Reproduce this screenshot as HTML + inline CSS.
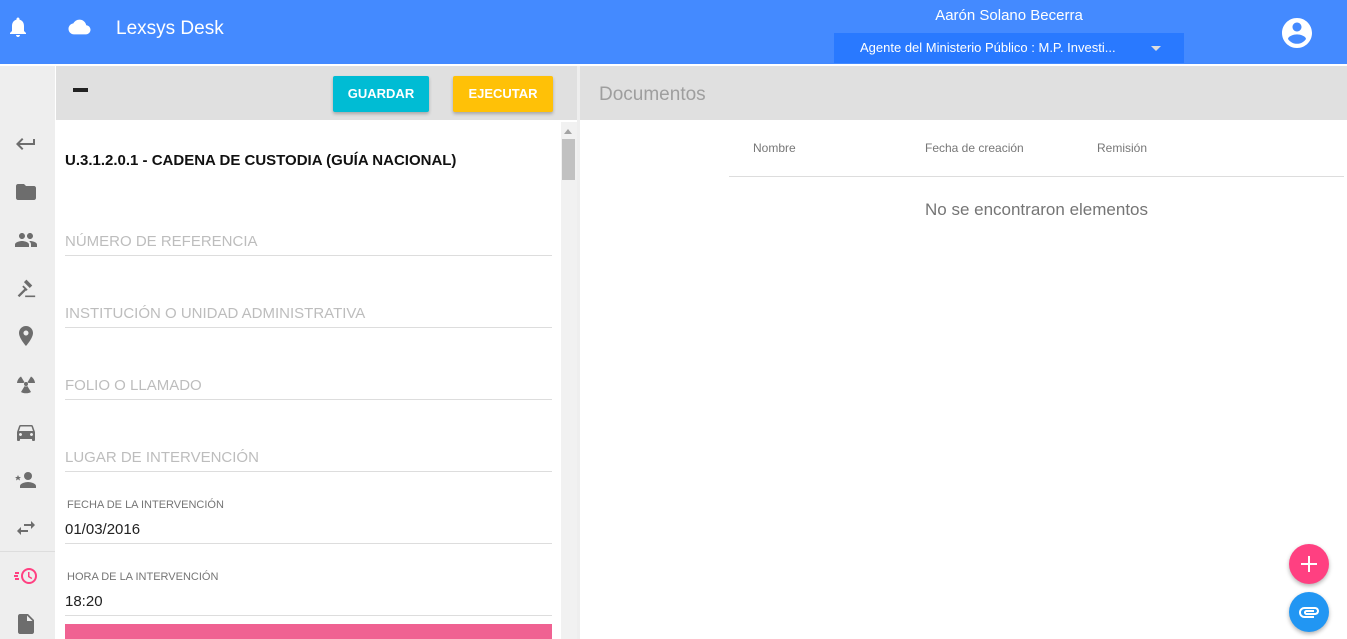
<!DOCTYPE html>
<html><head><meta charset="utf-8"><style>
*{margin:0;padding:0;box-sizing:border-box}
body{width:1347px;height:639px;overflow:hidden;background:#fff;font-family:"Liberation Sans",sans-serif;position:relative}
.abs{position:absolute}
.hdr{left:0;top:0;width:1347px;height:64px;background:#448aff}
.side{left:0;top:66px;width:55px;height:573px;background:#eeeeee}
.ico{position:absolute;left:14px;width:24px;height:24px;fill:#6d6d6d}
.field{position:absolute;left:65px;width:487px;border-bottom:1px solid #ddd;color:#bdbdbd;font-size:15px;padding-top:2px}
.lbl{position:absolute;left:67px;font-size:11px;color:#757575}
.val{position:absolute;left:65px;font-size:15px;color:#222}
</style></head><body>
<div class="abs hdr"></div>
<svg class="abs" style="left:6px;top:14px" width="24" height="26" viewBox="0 0 24 24" fill="#fff"><path d="M12 22c1.1 0 2-.9 2-2h-4c0 1.1.9 2 2 2zm6-6v-5c0-3.07-1.63-5.64-4.5-6.32V4c0-.83-.67-1.5-1.5-1.5s-1.5.67-1.5 1.5v.68C7.64 5.36 6 7.92 6 11v5l-2 2v1h16v-1l-2-2z"/></svg>
<svg class="abs" style="left:66px;top:16px" width="27" height="22" viewBox="0 0 24 24" fill="#fff"><path d="M19.35 10.04C18.67 6.59 15.64 4 12 4 9.11 4 6.6 5.64 5.35 8.04 2.34 8.36 0 10.91 0 14c0 3.31 2.69 6 6 6h13c2.76 0 5-2.24 5-5 0-2.64-2.05-4.78-4.65-4.96z"/></svg>
<div class="abs" style="left:116px;top:18px;color:#fff;font-size:19px">Lexsys Desk</div>
<div class="abs" style="left:834px;top:7px;width:350px;text-align:center;color:#fff;font-size:15px">Aarón Solano Becerra</div>
<div class="abs" style="left:834px;top:33px;width:350px;height:30px;background:#2979ff;color:#fff;font-size:13px;padding:7px 0 0 26px">Agente del Ministerio Público : M.P. Investi...</div>
<div class="abs" style="left:1151px;top:46px;width:0;height:0;border-left:5px solid transparent;border-right:5px solid transparent;border-top:5px solid #ddd"></div>
<svg class="abs" style="left:1279px;top:15px" width="36" height="36" viewBox="0 0 24 24" fill="#fff"><path d="M12 2C6.48 2 2 6.48 2 12s4.48 10 10 10 10-4.48 10-10S17.52 2 12 2zm0 3c1.66 0 3 1.34 3 3s-1.34 3-3 3-3-1.34-3-3 1.34-3 3-3zm0 14.2c-2.5 0-4.71-1.28-6-3.22.03-1.99 4-3.08 6-3.08 1.99 0 5.97 1.09 6 3.08-1.29 1.94-3.5 3.22-6 3.22z"/></svg>

<div class="abs" style="left:0;top:66px;width:55px;height:54px;background:#eeeeee"></div>
<div class="abs side"></div>
<div class="abs" style="left:0;top:551px;width:55px;height:1px;background:#ddd"></div>
<svg class="ico" style="top:132px" viewBox="0 0 24 24"><path d="M19 7v4H5.83l3.58-3.59L8 6l-6 6 6 6 1.41-1.41L5.83 13H21V7z"/></svg>
<svg class="ico" style="top:180px" viewBox="0 0 24 24"><path d="M10 4H4c-1.1 0-2 .9-2 2v12c0 1.1.9 2 2 2h16c1.1 0 2-.9 2-2V8c0-1.1-.9-2-2-2h-8l-2-2z"/></svg>
<svg class="ico" style="top:228px" viewBox="0 0 24 24"><path d="M16 11c1.66 0 2.99-1.34 2.99-3S17.66 5 16 5c-1.66 0-3 1.34-3 3s1.34 3 3 3zm-8 0c1.66 0 2.99-1.34 2.99-3S9.66 5 8 5C6.34 5 5 6.34 5 8s1.34 3 3 3zm0 2c-2.33 0-7 1.17-7 3.5V19h14v-2.5c0-2.33-4.67-3.5-7-3.5zm8 0c-.29 0-.62.02-.97.05 1.16.84 1.97 1.97 1.97 3.45V19h6v-2.5c0-2.33-4.67-3.5-7-3.5z"/></svg>
<svg class="ico" style="top:278px;left:16px;width:20px;height:20px" viewBox="0 0 24 24"><path d="M11 21h12v2H11zM2 21l9-9 2 2-9 9zM12.5 2l7 7-3 3-7-7zM9 9l5 5-1.5 1.5-5-5zM16 5l4 4"/></svg>
<svg class="ico" style="top:324px" viewBox="0 0 24 24"><path d="M12 2C8.13 2 5 5.13 5 9c0 5.25 7 13 7 13s7-7.75 7-13c0-3.87-3.13-7-7-7zm0 9.5c-1.38 0-2.5-1.12-2.5-2.5s1.12-2.5 2.5-2.5 2.5 1.12 2.5 2.5-1.12 2.5-2.5 2.5z"/></svg>
<svg class="ico" style="top:372px" viewBox="0 0 24 24"><circle cx="12" cy="12" r="2"/><path d="M10.5 10.3 7 4.5C4.7 5.9 3.2 8.3 3 11h6.5c.2-.3.6-.6 1-.7zM13.5 10.3c.4.1.8.4 1 .7H21c-.2-2.7-1.7-5.1-4-6.5zM12 14.5c-.6 0-1-.1-1.4-.4L7 20c1.5.9 3.2 1.3 5 1.3s3.5-.4 5-1.3l-3.6-5.9c-.4.3-.8.4-1.4.4z"/></svg>
<svg class="ico" style="top:420px" viewBox="0 0 24 24"><path d="M18.92 6.01C18.72 5.42 18.16 5 17.5 5h-11c-.66 0-1.21.42-1.420 1.01L3 12v8c0 .55.45 1 1 1h1c.55 0 1-.45 1-1v-1h12v1c0 .55.45 1 1 1h1c.55 0 1-.45 1-1v-8l-2.08-5.99zM6.5 16c-.83 0-1.5-.67-1.5-1.5S5.67 13 6.5 13s1.5.67 1.5 1.5S7.33 16 6.5 16zm11 0c-.83 0-1.5-.67-1.5-1.5s.67-1.5 1.5-1.5 1.5.67 1.5 1.5-.67 1.5-1.5 1.5zM5 11l1.5-4.5h11L19 11H5z"/></svg>
<svg class="ico" style="top:468px" viewBox="0 0 24 24"><circle cx="14" cy="8" r="4"/><path d="M14 14c-2.67 0-8 1.34-8 4v2h16v-2c0-2.66-5.33-4-8-4zM4 7l.9 2H7l-1.6 1.3.6 2.2L4 11.2 2 12.5l.6-2.2L1 9h2.1z"/></svg>
<svg class="ico" style="top:516px" viewBox="0 0 24 24"><path d="M6.99 11L3 15l3.99 4v-3H14v-2H6.99v-3zM21 9l-3.99-4v3H10v2h7.01v3L21 9z"/></svg>
<svg class="ico" style="top:564px;fill:#ff4081" viewBox="0 0 24 24"><path d="M15 4a8 8 0 1 0 0 16 8 8 0 0 0 0-16zm0 14a6 6 0 1 1 0-12 6 6 0 0 1 0 12zm.5-10H14v5l3.5 2.1.75-1.23-2.75-1.62zM1 8h4v2H1zM1 14h4v2H1zM0 11h4v2H0z"/></svg>
<svg class="ico" style="top:612px" viewBox="0 0 24 24"><path d="M6 2c-1.1 0-2 .9-2 2v16c0 1.1.9 2 2 2h12c1.1 0 2-.9 2-2V8l-6-6H6zm7 7V3.5L18.5 9H13z"/></svg>

<div class="abs" style="left:56px;top:66px;width:521px;height:54px;background:#e0e0e0"></div>
<div class="abs" style="left:73px;top:88px;width:15px;height:4px;background:#222"></div>
<div class="abs" style="left:333px;top:76px;width:96px;height:36px;background:#00bcd4;color:#fff;font-weight:bold;font-size:13px;text-align:center;line-height:36px;border-radius:2px;box-shadow:0 2px 3px rgba(0,0,0,.25)">GUARDAR</div>
<div class="abs" style="left:453px;top:76px;width:100px;height:36px;background:#ffc107;color:#fff;font-weight:bold;font-size:13px;text-align:center;line-height:36px;border-radius:2px;box-shadow:0 2px 3px rgba(0,0,0,.25)">EJECUTAR</div>
<div class="abs" style="left:561px;top:122px;width:16px;height:517px;background:#f1f1f1"></div>
<div class="abs" style="left:562px;top:139px;width:13px;height:41px;background:#c1c1c1"></div>
<div class="abs" style="left:564px;top:129px;width:0;height:0;border-left:4px solid transparent;border-right:4px solid transparent;border-bottom:5px solid #a3a3a3"></div>
<div class="abs" style="left:577px;top:66px;width:3px;height:573px;background:#eee"></div>

<div class="abs" style="left:65px;top:152px;font-size:15px;font-weight:bold;color:#111">U.3.1.2.0.1 - CADENA DE CUSTODIA (GUÍA NACIONAL)</div>
<div class="field" style="top:231px;height:25px">NÚMERO DE REFERENCIA</div>
<div class="field" style="top:303px;height:25px">INSTITUCIÓN O UNIDAD ADMINISTRATIVA</div>
<div class="field" style="top:375px;height:25px">FOLIO O LLAMADO</div>
<div class="field" style="top:447px;height:25px">LUGAR DE INTERVENCIÓN</div>
<div class="lbl" style="top:499px">FECHA DE LA INTERVENCIÓN</div>
<div class="val" style="top:521px">01/03/2016</div>
<div class="abs" style="left:65px;top:543px;width:487px;height:1px;background:#ddd"></div>
<div class="lbl" style="top:571px">HORA DE LA INTERVENCIÓN</div>
<div class="val" style="top:593px">18:20</div>
<div class="abs" style="left:65px;top:615px;width:487px;height:1px;background:#ddd"></div>
<div class="abs" style="left:65px;top:624px;width:487px;height:15px;background:#f06292"></div>

<div class="abs" style="left:580px;top:66px;width:767px;height:54px;background:#e0e0e0"></div>
<div class="abs" style="left:599px;top:84px;font-size:19px;color:#9e9e9e">Documentos</div>
<div class="abs" style="left:753px;top:141px;font-size:12px;color:#777">Nombre</div>
<div class="abs" style="left:925px;top:141px;font-size:12px;color:#777">Fecha de creación</div>
<div class="abs" style="left:1097px;top:141px;font-size:12px;color:#777">Remisión</div>
<div class="abs" style="left:729px;top:176px;width:615px;height:1px;background:#ddd"></div>
<div class="abs" style="left:729px;top:200px;width:615px;text-align:center;font-size:17px;color:#757575">No se encontraron elementos</div>

<div class="abs" style="left:1289px;top:544px;width:40px;height:40px;border-radius:50%;background:#ff4081;box-shadow:0 2px 4px rgba(0,0,0,.3)"></div>
<div class="abs" style="left:1301px;top:563px;width:16px;height:2px;background:#fff"></div>
<div class="abs" style="left:1308px;top:556px;width:2px;height:16px;background:#fff"></div>
<div class="abs" style="left:1289px;top:592px;width:40px;height:40px;border-radius:50%;background:#2196f3;box-shadow:0 2px 4px rgba(0,0,0,.3)"></div>
<svg class="abs" style="left:1297px;top:600px" width="24" height="24" viewBox="0 0 24 24" fill="#fff"><path d="M2 12.5C2 9.46 4.46 7 7.5 7H18c2.21 0 4 1.79 4 4s-1.79 4-4 4H9.5C8.12 15 7 13.88 7 12.5S8.12 10 9.5 10H17v2H9.41c-.55 0-.55 1 0 1H18c1.1 0 2-.9 2-2s-.9-2-2-2H7.5C5.57 9 4 10.57 4 12.5S5.57 16 7.5 16H17v2H7.5C4.46 18 2 15.54 2 12.5z"/></svg>
</body></html>
